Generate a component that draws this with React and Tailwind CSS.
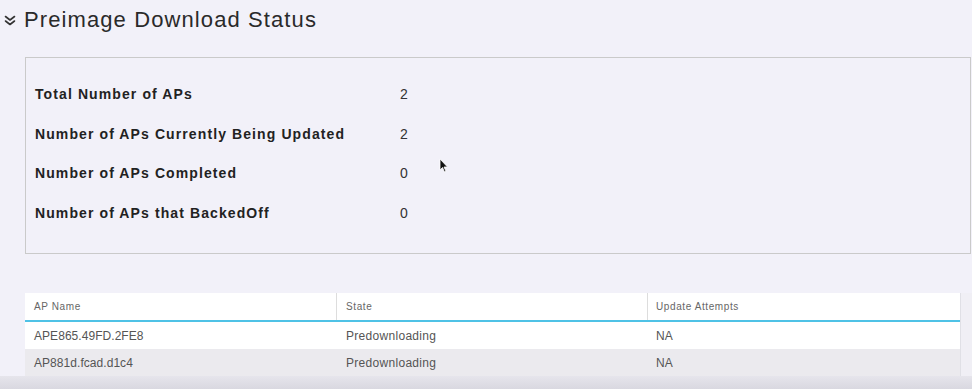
const stats = [
  { label: 'Total Number of APs', value: 2 },
  { label: 'Number of APs Currently Being Updated', value: 2 },
  { label: 'Number of APs Completed', value: 0 },
  { label: 'Number of APs that BackedOff', value: 0 },
]

const aps = [
  { name: 'APE865.49FD.2FE8', state: 'Predownloading', attempts: 'NA' },
  { name: 'AP881d.fcad.d1c4', state: 'Predownloading', attempts: 'NA' },
]

const DoubleChevron = () => (
  <svg width="12" height="11" viewBox="0 0 12 11" className="mt-[2px]">
    <path d="M1.5 1.5 L6 5 L10.5 1.5 M1.5 6 L6 9.5 L10.5 6" fill="none" stroke="#333" strokeWidth="1.6" strokeLinecap="round" strokeLinejoin="round" />
  </svg>
)

const App = () => {
  return (
    <div className="w-[972px] h-[389px] overflow-hidden bg-[#f2f1f9] text-[#222] relative" style={{ fontFamily: '"Liberation Sans", Arial, sans-serif' }}>
      {/* Title */}
      <div className="flex items-center h-[38px] pl-[4px]">
        <DoubleChevron />
        <h2 className="ml-[8px] text-[22px] tracking-[1.1px] text-[#2a2a2a]">Preimage Download Status</h2>
      </div>

      {/* Summary panel */}
      <div className="ml-[25px] mt-[19px] w-[946px] h-[197px] border border-[#cacaca] pt-[17px] pl-[9px]">
        {stats.map((s) => (
          <div key={s.label} className="flex items-center h-[39.5px]">
            <span className="w-[365px] text-[14px] font-bold tracking-[1.1px] text-[#222]">{s.label}</span>
            <span className="text-[14px] text-[#333]">{s.value}</span>
          </div>
        ))}
      </div>

      {/* Table */}
      <div className="mt-[39px] flex">
        <div className="ml-[25px] w-[935px]">
          <div className="flex h-[27px] bg-white items-center text-[10px] tracking-[0.6px] text-[#666]">
            <div className="w-[312px] h-full flex items-center pl-[9px] border-r border-[#ddd]">AP Name</div>
            <div className="w-[311px] h-full flex items-center pl-[9px] border-r border-[#ddd]">State</div>
            <div className="flex-1 h-full flex items-center pl-[8px]">Update Attempts</div>
          </div>
          <div className="h-[2px] bg-[#4fc2e6] w-[947px]" />
          {aps.map((ap, i) => (
            <div key={ap.name} className={`flex h-[27px] items-center text-[12px] tracking-[0.05px] text-[#555] ${i % 2 === 0 ? 'bg-white' : 'bg-[#ebeaee]'}`}>
              <div className="w-[312px] pl-[9px]">{ap.name}</div>
              <div className="w-[311px] pl-[9px] tracking-[0.3px]">{ap.state}</div>
              <div className="flex-1 pl-[8px]">{ap.attempts}</div>
            </div>
          ))}
        </div>
        <div className="w-[12px] h-[83px] border-l border-[#e0e0e6] bg-[#f0eff5]" />
      </div>

      {/* bottom shade */}
      <div className="absolute left-0 right-0 bottom-0 h-[13px] bg-gradient-to-b from-[#e6e5ec] to-[#d9d8e0]" />

      {/* cursor */}
      <svg className="absolute left-[439px] top-[158px]" width="10" height="16" viewBox="0 0 10 16">
        <path d="M1 1 L1 12 L3.5 9.5 L5.5 14 L7 13.3 L5 9 L8.5 9 Z" fill="#111" stroke="#fff" strokeWidth="0.8" />
      </svg>
    </div>
  )
}

export default App
